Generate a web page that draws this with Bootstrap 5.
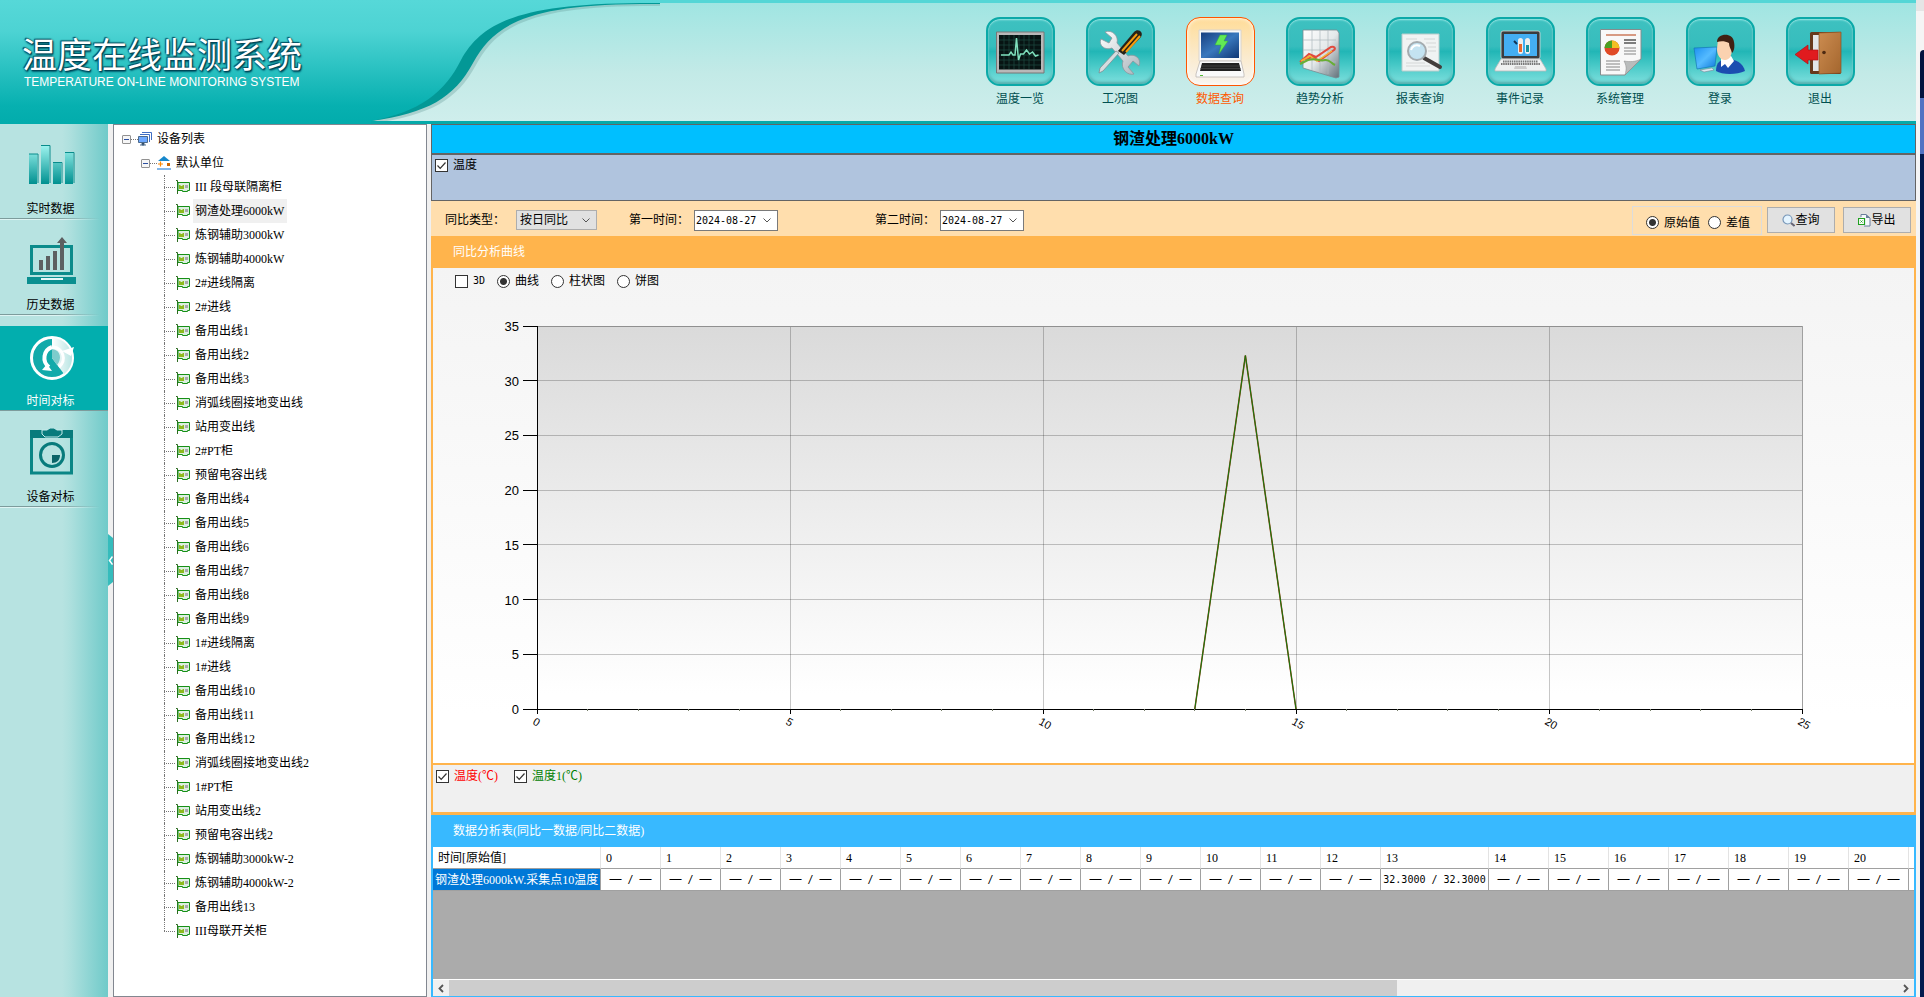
<!DOCTYPE html>
<html lang="zh-CN">
<head>
<meta charset="utf-8">
<meta name="viewport" content="width=device-width, initial-scale=1">
<title>温度在线监测系统</title>
<link href="https://cdn.jsdelivr.net/npm/bootstrap@5.3.0/dist/css/bootstrap.min.css" rel="stylesheet">
<style>
  :root { --song: "Liberation Serif", "Noto Sans CJK SC", serif; --teal: #02aeae; --amber: #ffb44c; --azure: #38b9ff; }
  body { font: 12px/18px var(--song); color: #000; background: #f0f0f0; }
  a { color: inherit; text-decoration: none; }
  .mono { font-family: "DejaVu Sans Mono", monospace; font-size: 10px; }

  /* header */
  .app-head { height: 124px; border-bottom: 3px solid #04a9a9; border-top: 3px solid #54d6d6; background: linear-gradient(#a0e5e2, #c3eae7 60%, #cfeeec); }
  .brand-zone { width: 660px; height: 124px; margin: -3px 0; }
  .brand-bg { width: 660px; height: 124px; }
  .brand-text { left: 22px; top: 35px; color: #fff; }
  .brand-title { font: 400 35px/36px "Noto Sans CJK SC", sans-serif; margin: 0; text-shadow: 0 0 2px #045, 1px 1px 1px #045, -1px -1px 1px #056, 1px 2px 2px #067; }
  .brand-sub { font: 12px/14px "Liberation Sans", Arial, sans-serif; margin: 4px 0 0 2px; white-space: nowrap; }
  .main-nav { padding: 14px 46px 0 0; color: #004f50; }
  .main-nav a { width: 100px; line-height: 16px; }
  .tile { width: 69px; height: 69px; border: 2px solid #0ba9a8; border-radius: 14px; margin-bottom: 5px;
    background: linear-gradient(#3ec1c0, #36bdbd 42%, #22b6b6 50%, #45c8c6 70%, #7fe0de); box-shadow: inset 0 1px 2px #9fe9e7, inset 0 -2px 3px #4fa9a8; }
  .tile svg { display: block; margin: -2px; width: 69px; height: 69px; }
  .current { color: #ff5a00; }
  .current .tile { border: 1px solid #ff5500; background: linear-gradient(#ffdc98, #fbeacb 55%, #f8f5f1); box-shadow: inset 0 0 4px #fff; }
  .current .tile svg { margin: -1px; }

  /* left function bar */
  .func-bar { width: 108px; background: linear-gradient(90deg, #b7e3e1 0 62px, #aee0de 70px, #6fcac9); }
  .func-bar a { height: 96px; padding: 16px 7px 0 0; background: linear-gradient(90deg, #7d9c9c 0 55px, transparent 100px) 0 94px / 100% 1px no-repeat, linear-gradient(90deg, #dff5f4 0 55px, transparent 100px) 0 95px / 100% 1px no-repeat; }
  .func-bar svg { width: 52px; height: 52px; margin-bottom: 8px; }
  .func-bar .chosen { color: #fff; background: linear-gradient(var(--teal), var(--teal)) 0 10px / 100% 84px no-repeat, linear-gradient(#7d9c9c, #7d9c9c) 0 94px / 100% 1px no-repeat; }
  .gutter { width: 5px; }
  .fold { width: 5px; height: 52px; background: #35bcbc; clip-path: polygon(0 0, 100% 4px, 100% 48px, 0 100%); margin-bottom: 411px; }
  .fold svg { width: 5px; height: 9px; display: block; }

  /* device tree */
  .tree-box { width: 314px; border: 1px solid #828790; background: #fff; padding: 2px 0 0 8px; margin-right: 4px; }
  .tree-box ul { list-style: none; margin: 0; padding: 0; }
  .node { height: 24px; line-height: 24px; white-space: nowrap; }
  .node svg { width: 14px; height: 14px; margin-right: 3px; flex: none; }
  .node span { padding: 0 3px 0 2px; }
  .toggler { width: 9px; height: 9px; border: 1px solid #919191; border-radius: 1px; background: linear-gradient(#2b4fa0, #2b4fa0) center / 5px 1px no-repeat #f6f6f6; padding: 0; }
  .stub { width: 7px; border-top: 1px dotted #777; }
  .lvl2 { padding-left: 19px; }
  .leaf { margin-left: 42px; position: relative; }
  .leaf::before { content: ""; position: absolute; left: 0; top: 0; height: 24px; border-left: 1px dotted #777; }
  .leaf:last-child::before { height: 12px; }
  .leaf .stub { width: 11px; margin-right: 1px; }
  .picked { background: #f0f0f0; }

  /* work area */
  .cap-bar { height: 30px; border: 1px solid #646464; background: #00bfff; font: bold 16px/28px var(--song); margin: 0; }
  .pick-bar { height: 47px; border: 1px solid #646464; background: #b0c4de; padding: 1px 3px; }
  input[type=checkbox], input[type=radio] { appearance: none; width: 13px; height: 13px; border: 1px solid #333; background: #fff center / 11px 11px no-repeat; margin: 0 5px 0 0; flex: none; }
  input[type=checkbox]:checked { background-image: url("data:image/svg+xml,%3Csvg xmlns='http://www.w3.org/2000/svg' viewBox='0 0 11 11'%3E%3Cpath d='M1.5 5.5l2.7 2.8L9.5 2.5' fill='none' stroke='%23333' stroke-width='1.2'/%3E%3C/svg%3E"); }
  input[type=radio] { border-radius: 50%; }
  input[type=radio]:checked { background: radial-gradient(circle, #333 0 3px, #fff 4px); }
  .query-bar { height: 35px; background: #ffdead; padding: 3px 5px 0 14px; white-space: nowrap; }
  .field { background: no-repeat right 6px center / 8px 5px url("data:image/svg+xml,%3Csvg xmlns='http://www.w3.org/2000/svg' viewBox='0 0 8 5'%3E%3Cpath d='M.5.5L4 4 7.5.5' fill='none' stroke='%23555'/%3E%3C/svg%3E"); appearance: none; border-radius: 0; color: #000; }
  .kind-label { width: 71px; }
  .day-label { width: 65px; margin-left: 32px; }
  .day-label.far { margin-left: 97px; }
  .kind { width: 81px; height: 20px; border: 1px solid #adadad; background-color: #e1e1e1; font: 12px/16px var(--song); padding: 0 3px; }
  .date { width: 84px; height: 21px; border: 1px solid #7a7a7a; background-color: #fff; padding: 0 1px; }
  .mode-box { height: 29px; width: 130px; border: 1px solid #dcdcdc; padding: 5px 0 0 13px; margin-right: 5px; }
  .push { width: 68px; height: 26px; border: 1px solid #adadad; background: #e1e1e1; font: 12px/18px var(--song); padding: 0; }
  .push svg { width: 13px; height: 13px; }
  .sec-bar { height: 32px; padding: 0 22px; color: #fff; font: 12px/32px var(--song); margin: 0; }
  .curve-card { border: solid var(--amber); border-width: 0 2px 2px; background: linear-gradient(#f4f4f4, #fff 90%); min-height: 300px; }
  .shape-row { padding: 4px 22px 0; }
  .plot-wrap { padding: 36px 112px 54px 104px; min-height: 0; }
  .plot { background: linear-gradient(#dadada, #fff 96%); }
  .plot svg { overflow: visible; position: absolute; inset: 0; width: 100%; height: 100%; font: 13px "Liberation Sans", Arial, sans-serif; }
  .plot .xlab { font-size: 11px; transform-box: fill-box; transform-origin: 0 0; transform: rotate(30deg); }
  .legend-card { height: 50px; border: solid var(--amber); border-width: 0 2px 3px; padding: 2px 3px; background: #f0f0f0; }
  .grid-card { border: solid var(--azure); border-width: 0 2px 1px; background: #ababab; }
  .grid-view { height: 132px; overflow: hidden; }
  .grid-view table { width: max-content; table-layout: fixed; border-collapse: separate; border-spacing: 0; background: #fff; }
  .grid-view th, .grid-view td { height: 22px; border-right: 1px solid #a0a0a0; border-bottom: 1px solid #a0a0a0; line-height: 18px; white-space: nowrap; width: 60px; padding: 0; text-align: center; font-weight: normal; }
  .grid-view thead th { border-right-color: #e3e3e3; text-align: left; padding-left: 5px; }
  .grid-view tr > :first-child { width: 168px; }
  .grid-view tr > :nth-child(15) { width: 108px; }
  .grid-view tbody th { background: #0078d7; color: #fff; text-align: left; padding-left: 2px; }
  .dash { font: 12px/16px "Liberation Sans", Arial, sans-serif; }
  .h-scroll { height: 17px; background: #f0f0f0; border-top: 1px solid #fff; }
  .h-scroll button { width: 16px; border: 0; padding: 0; background: none; line-height: 0; }
  .h-scroll .thumb { width: 64%; background: #cdcdcd; }
  .edge { width: 8px; background: linear-gradient(#e5e5e5 11px, #f5f5f5 0); padding: 50px 0 0 4px; }
  .edge div { border-radius: 4px 0 0 0; background: linear-gradient(#02133f 48px, #5273c3 0 104px, #031a4e 0); }
</style>
</head>
<body class="d-flex min-vh-100">

<svg width="0" height="0" class="position-absolute" aria-hidden="true">
  <defs>
    <linearGradient id="gHead" x2="0" y2="1"><stop stop-color="#56d8d8"/><stop offset=".25" stop-color="#4dd3d3"/><stop offset=".85" stop-color="#07b0b0"/><stop offset="1" stop-color="#02acac"/></linearGradient>
    <linearGradient id="gBar" x2="0" y2="1"><stop stop-color="#9ff5f0"/><stop offset="1" stop-color="#009090"/></linearGradient>
    <linearGradient id="gSilver" x2="1" y2="1"><stop stop-color="#fff"/><stop offset="1" stop-color="#a9b4bb"/></linearGradient>
    <linearGradient id="gPaper" x2="1" y2="1"><stop stop-color="#fff"/><stop offset=".5" stop-color="#e4e9ea"/><stop offset="1" stop-color="#61717a"/></linearGradient>
    <linearGradient id="gScreen" x2="1" y2="1"><stop stop-color="#184080"/><stop offset=".5" stop-color="#3978bd"/><stop offset="1" stop-color="#0f3775"/></linearGradient>
    <linearGradient id="gSky" x2="1" y2="1"><stop stop-color="#1b8ef0"/><stop offset=".5" stop-color="#55bbff"/><stop offset="1" stop-color="#0a75d8"/></linearGradient>
    <linearGradient id="gDoor" x2="1" y2="1"><stop stop-color="#cc8c50"/><stop offset="1" stop-color="#a4662e"/></linearGradient>
    <linearGradient id="gDial" x1="0" x2="1"><stop stop-color="#fff"/><stop offset="1" stop-color="#b9e5e3"/></linearGradient>
    <symbol id="card" viewBox="0 0 14 14"><path d="M0 .5h1.500V14" fill="none" stroke="#2c6b20"/><path d="M2 2.500h11.500v8h-2v1h-5v-1H2z" fill="#dcefe0" stroke="#169016"/><path d="M3 5h1.500v1h2V5H8v4H3z" fill="#8dba1e"/><path d="M9 5h3v3H9z" fill="#aaa9ad"/></symbol>
  </defs>
</svg>

<div class="d-flex flex-column flex-fill" style="min-width:0">
  <header class="app-head d-flex justify-content-between">
    <div class="brand-zone position-relative">
      <svg class="brand-bg" viewBox="0 0 660 124" aria-hidden="true">
        <path d="M371 121C428 113 454 98 473 63 494 24 528 5 640 4h20V0H0v124h371z" fill="#6b9e9c" opacity=".35" transform="translate(3 2)"/>
        <path d="M0 0h660v4h-20C528 5 494 24 473 63 454 98 428 113 371 121H0z" fill="#039896"/>
        <path d="M0 0h660v3h-20C520 4 482 22 461 60 445 92 420 112 371 121V124H0z" fill="url(#gHead)"/>
        <path d="M371 121h289v3H371z" fill="#04a9a9"/>
      </svg>
      <div class="brand-text position-absolute">
        <h1 class="brand-title text-nowrap">温度在线监测系统</h1>
        <p class="brand-sub">TEMPERATURE ON-LINE MONITORING SYSTEM</p>
      </div>
    </div>
    <nav class="main-nav d-flex text-center" aria-label="主菜单">
      <a href="#" class="d-flex flex-column align-items-center"><div class="tile"><svg viewBox="0 0 69 69"><path d="M10.500 15h47.500v41H10.500z" fill="#b8b8b8" stroke="#777"/><path d="M13 18h42v34.500H13z" fill="#071413"/><path d="M18 18v34M23 18v34M28 18v34M33 18v34M38 18v34M43 18v34M48 18v34M13 23h42M13 28h42M13 33h42M13 38h42M13 43h42M13 48h42" stroke="#1c4b43" stroke-width=".7"/><path d="M15 38h8l2-3 2 3h2l1.500-17 2 22 2-6h3l3-4 3 4 3-2 3 4 3-1" fill="none" stroke="#7fe0bd" stroke-width="1.500"/></svg></div>温度一览</a>
      <a href="#" class="d-flex flex-column align-items-center"><div class="tile"><svg viewBox="0 0 69 69"><path d="M19 15l7 6-3 5-8-4c-3 6 4 12 11 9l11 13c-3 8 5 15 11 13l-6-7 5-6 6 5c3-7-4-13-11-10L31 26c2-7-5-14-12-11z" fill="url(#gSilver)" stroke="#8b979d" stroke-width=".8"/><path d="M33 36L17 54l-4 2 1-5 16-17z" fill="#d5dcdf" stroke="#7a868b" stroke-width=".7"/><path d="M32 34L48 15c4-4 10 0 7 5L38 38z" fill="#272218"/><path d="M36 34l15-17M40 35l14-16" stroke="#f59b10" stroke-width="2"/></svg></div>工况图</a>
      <a href="#" class="current d-flex flex-column align-items-center" aria-current="page"><div class="tile"><svg viewBox="0 0 69 69"><path d="M13 13h42v31H13z" fill="#f9f9f9" stroke="#d8d4cf"/><path d="M15 15.500h38v25.500H15z" fill="url(#gScreen)"/><path d="M34 18h7l-3 6h4l-9 13 2-9h-6z" fill="#62ea55" stroke="#32ad35" stroke-width=".5"/><path d="M14 44h41l3 13v3H10v-3z" fill="#fafafa" stroke="#bcb8b4" stroke-width=".8"/><path d="M16 46h37l2 8H14z" fill="#222"/><path d="M15 49h39M14.500 51.500h40" stroke="#4a4a4a" stroke-width=".7"/><path d="M14 58.500h3" stroke="#5b3"/></svg></div>数据查询</a>
      <a href="#" class="d-flex flex-column align-items-center"><div class="tile"><svg viewBox="0 0 69 69"><path d="M17 13h34l2 3v44l-3 1-33-10z" fill="url(#gPaper)" stroke="#7a8b91" stroke-width=".8"/><path d="M17 23h33M17 33h33M17 42l33 3M26 13v40M34 13v43M42 13v44" stroke="#aeb8bc" stroke-width=".7"/><path d="M14 45l9-8 7 3 15-10c3-1 5 1 3 3L33 44l-6-4-11 3" fill="none" stroke="#e24b3e" stroke-width="2"/><path d="M15 44l9-5 7 5 15-10" fill="none" stroke="#f2b32f" stroke-width="1.500"/><path d="M14 47l8-4c10-3 10 2 17 0 4-1 6 3 10 5" fill="none" stroke="#68ae35" stroke-width="2"/></svg></div>趋势分析</a>
      <a href="#" class="d-flex flex-column align-items-center"><div class="tile"><svg viewBox="0 0 69 69"><path d="M16 17h37v37H16z" fill="#f0f3f3" stroke="#b9cccb"/><path d="M38 22h11M40 26h10M42 30h8M42 34h8M20 46h19M20 49h24M20 22h11" stroke="#d4d7d7" stroke-width="1.200"/><path d="M38 41l16 9" stroke="#443f3d" stroke-width="4" stroke-linecap="round"/><circle cx="31" cy="34" r="9" fill="#bcdff0" fill-opacity=".85" stroke="#a4abaf" stroke-width="2"/><path d="M25 33c1-4 5-6 9-4" stroke="#fff" stroke-width="2" fill="none"/></svg></div>报表查询</a>
      <a href="#" class="d-flex flex-column align-items-center"><div class="tile"><svg viewBox="0 0 69 69"><rect x="15" y="14" width="39" height="28" rx="2" fill="#3a3c3f" stroke="#dadada" stroke-width=".8"/><path d="M18 17h33v22H18z" fill="#44aef2"/><path d="M28 24l3 3" stroke="#135" stroke-width="2"/><rect x="32" y="21" width="5" height="16" rx="2.500" fill="#eee"/><rect x="39" y="21" width="5" height="16" rx="2.500" fill="#eee"/><path d="M34.500 27v8" stroke="#ea662b" stroke-width="3"/><path d="M41.500 28v7" stroke="#14919f" stroke-width="3"/><path d="M15 42h39l6 10v2H9v-2z" fill="#eff1f1" stroke="#bbb" stroke-width=".8"/><path d="M17 44.500h35M15 47h39" stroke="#777" stroke-width="2" stroke-dasharray="1.500 .7"/><path d="M29 49h11l1 3H28z" fill="#ccc"/></svg></div>事件记录</a>
      <a href="#" class="d-flex flex-column align-items-center"><div class="tile"><svg viewBox="0 0 69 69"><path d="M14.500 12.500h40.500V42L39 58H14.500z" fill="#f8f8f8" stroke="#868c8d"/><path d="M55 42L39 58c2-7 1-10-1-14 6 1 11 1 17-2z" fill="#b9bcbc" stroke="#888" stroke-width=".5"/><path d="M20 18h30" stroke="#d79a83" stroke-width="2"/><circle cx="26" cy="31" r="7.500" fill="#e04a26"/><path d="M26 31V23.500A7.500 7.500 0 0 0 18.500 31z" fill="#4aa023"/><path d="M26 31v-7.500A7.500 7.500 0 0 1 33.500 31z" fill="#f2bf25"/><path d="M38 23h12M38 26h12" stroke="#555" stroke-width="1.500"/><path d="M38 31h12M38 34h12M38 37h12M20 44h14M20 47h14M20 50h14M20 53h14" stroke="#aaa" stroke-width="1.500"/></svg></div>系统管理</a>
      <a href="#" class="d-flex flex-column align-items-center"><div class="tile"><svg viewBox="0 0 69 69"><path d="M8 31l23-1-2 19-18 3z" fill="url(#gSky)" stroke="#1479b5" stroke-width=".7"/><path d="M14 53l12-2 2 2-10 2z" fill="#d9e8f0" stroke="#778" stroke-width=".5"/><path d="M30 54c0-9 5-12 11-12 9 0 16 4 18 12-8 4-23 4-29 0z" fill="#1b4db0"/><path d="M35 41l10-2 3 5-6 7-3-4-4 3z" fill="#fff"/><path d="M32 22c8-3 14 0 14 9 0 7-2 12-7 12s-8-5-8-11z" fill="#fbd2b0"/><path d="M31 25c0-9 16-10 17 0 1 5 0 9-2 11-1-4-3-6-3-10-4-2-8-2-12-1z" fill="#402113"/></svg></div>登录</a>
      <a href="#" class="d-flex flex-column align-items-center"><div class="tile"><svg viewBox="0 0 69 69"><rect x="24" y="15" width="31" height="42" rx="1.500" fill="#67391c"/><path d="M27 18h7v36h-7z" fill="#e3e6e8"/><path d="M33 16l22-1v41l-22 1z" fill="url(#gDoor)" stroke="#8b5425" stroke-width=".7"/><circle cx="38" cy="35.500" r="1.800" fill="#4d2a12"/><path d="M9 37.500L22 28v5h10v10H22v4z" fill="#e01b1e" stroke="#b21215" stroke-width=".7"/></svg></div>退出</a>
    </nav>
  </header>

  <div class="d-flex flex-fill">
    <nav class="func-bar flex-shrink-0" aria-label="功能">
      <a href="#" class="d-flex flex-column align-items-center"><svg viewBox="0 0 52 52"><path d="M4 14h8v30H4zM16 5h8v39h-8zM28 22h8v22h-8zM40 12h8v32h-8z" fill="url(#gBar)"/><path d="M4 14h9v29M16 5.500h9V43M28 22.500h9V43M40 12.500h9V43" fill="none" stroke="#088c8c"/></svg>实时数据</a>
      <a href="#" class="d-flex flex-column align-items-center"><svg viewBox="0 0 52 52"><path d="M6.500 10.500h40v27h-40z" fill="none" stroke="#0b8b8b" stroke-width="3"/><path d="M2 41h49v7H2z" fill="#0a8f90"/><path d="M16 42h22v2H16z" fill="#e4f8f8"/><path d="M14 24h4v10h-4zM21 20h4v14h-4zM28 15h4v19h-4zM35 6h4v28h-4zM32 7l5-6 5 6z" fill="#5d5f61"/></svg>历史数据</a>
      <a href="#" class="chosen d-flex flex-column align-items-center"><svg viewBox="0 0 52 52"><circle cx="27" cy="26" r="20.500" fill="#12aaaa" stroke="#fff" stroke-width="3"/><path d="M27 6a20 20 0 0 1 12 36L27 26z" fill="url(#gDial)"/><path d="M24 35a11.500 11.500 0 0 1 3-20" fill="none" stroke="#fff" stroke-width="4"/><path d="M17 38l10 1-5-7zM37 19l12-4-3 9z" fill="#fff"/><path d="M28 15c10 1 14 13 6 20" fill="none" stroke="#fff" stroke-width="3"/><path d="M27 17c9 1 10 10 5 16l-5-7z" fill="#7ccccc"/></svg>时间对标</a>
      <a href="#" class="d-flex flex-column align-items-center"><svg viewBox="0 0 52 52"><path d="M6.500 4h40v41h-40z" fill="none" stroke="#0a8686" stroke-width="3"/><path d="M5 2h43v8H5z" fill="#087b7c"/><path d="M17 2h5l3-2h4l3 2h5v4l-4 3H20l-3-3z" fill="#087b7c" stroke="#c4eaea"/><circle cx="27" cy="27" r="11.500" fill="none" stroke="#087b7c" stroke-width="3"/><path d="M27 27h8c0 5-3 8-8 8z" fill="#0b6468"/></svg>设备对标</a>
    </nav>
    <div class="gutter flex-shrink-0 d-flex align-items-end"><button type="button" class="fold border-0 p-0" aria-label="收起"><svg viewBox="0 0 5 9"><path d="M4.500.5l-3 4 3 4" fill="none" stroke="#fff" stroke-width="1.500"/></svg></button></div>

    <aside class="tree-box flex-shrink-0">
      <ul>
        <li>
          <div class="node d-flex align-items-center"><button type="button" class="toggler" aria-label="折叠"></button><i class="stub"></i><svg viewBox="0 0 14 14"><path d="M4 .500h9.500V8M2 2.500h9.500V10" fill="none" stroke="#3f6ec4"/><path d="M.5 4.500h9v6h-9z" fill="#6ea8ff" stroke="#4b6a8c"/><path d="M4 11h2v2H4zM2 13h6" stroke="#4b6a8c"/></svg><span>设备列表</span></div>
          <div class="node lvl2 d-flex align-items-center"><button type="button" class="toggler" aria-label="折叠"></button><i class="stub"></i><svg viewBox="0 0 14 14"><path d="M1 5l6-5 6 5z" fill="#1688cc"/><path d="M1 8h5M3.500 5.500v5" stroke="#f80" stroke-width="1.200"/><path d="M10 7h3v3h-3z" fill="#c60"/><path d="M0 13h14" stroke="#0b6fd0"/></svg><span>默认单位</span></div>
          <ul id="devices"></ul>
        </li>
      </ul>
    </aside>

    <main class="d-flex flex-column flex-fill" style="min-width:0">
      <h2 class="cap-bar text-center">钢渣处理6000kW</h2>
      <div class="pick-bar"><label class="d-inline-flex align-items-center"><input type="checkbox" checked>温度</label></div>
      <form class="query-bar d-flex align-items-center">
        <label for="kind" class="kind-label">同比类型：</label>
        <select id="kind" class="field kind"><option>按日同比</option></select>
        <label for="d1" class="day-label">第一时间：</label>
        <input id="d1" class="field date mono" value="2024-08-27">
        <label for="d2" class="day-label far">第二时间：</label>
        <input id="d2" class="field date mono" value="2024-08-27">
        <div class="mode-box d-flex align-items-center ms-auto">
          <label class="d-flex align-items-center me-2"><input type="radio" name="mode" checked>原始值</label>
          <label class="d-flex align-items-center"><input type="radio" name="mode">差值</label>
        </div>
        <button type="button" class="push d-flex align-items-center justify-content-center me-2"><svg viewBox="0 0 13 13"><circle cx="5.500" cy="5.500" r="4.500" fill="#e4f4ff" stroke="#7897b8" stroke-width="1.200"/><path d="M9 9l3.500 3" stroke="#667" stroke-width="2"/></svg>查询</button>
        <button type="button" class="push d-flex align-items-center justify-content-center"><svg viewBox="0 0 13 13"><path d="M3 3V.500h5l4 3.500v8H6" fill="#f5f8fb" stroke="#6a7f9b"/><path d="M8 .500V4h4z" fill="#6a7f9b"/><path d="M.5 4.500h6v6h-6z" fill="#fff" stroke="#20a020" stroke-width="1.200"/><path d="M2.500 6.500l2 2m0-2l-2 2" stroke="#20a020"/></svg>导出</button>
      </form>

      <h3 class="sec-bar" style="background:var(--amber)">同比分析曲线</h3>
      <section class="curve-card d-flex flex-column flex-fill">
        <div class="shape-row d-flex align-items-center">
          <label class="d-flex align-items-center me-2 pe-1"><input type="checkbox"><span class="mono">3D</span></label>
          <label class="d-flex align-items-center me-2 pe-1"><input type="radio" name="shape" checked>曲线</label>
          <label class="d-flex align-items-center me-2 pe-1"><input type="radio" name="shape">柱状图</label>
          <label class="d-flex align-items-center"><input type="radio" name="shape">饼图</label>
        </div>
        <div class="plot-wrap flex-fill d-flex">
          <div class="plot position-relative flex-fill"><svg id="plot" role="img" aria-label="同比分析曲线"></svg></div>
        </div>
      </section>
      <div class="legend-card d-flex align-items-start">
        <label class="d-flex align-items-center me-3" style="color:#f00"><input type="checkbox" checked>温度(℃)</label>
        <label class="d-flex align-items-center" style="color:#008000"><input type="checkbox" checked>温度1(℃)</label>
      </div>

      <h3 class="sec-bar" style="background:var(--azure)">数据分析表(同比一数据/同比二数据)</h3>
      <section class="grid-card">
        <div class="grid-view">
          <table>
            <thead><tr id="hours"><th scope="col">时间[原始值]</th></tr></thead>
            <tbody><tr id="values"><th scope="row">钢渣处理6000kW.采集点10温度</th></tr></tbody>
          </table>
        </div>
        <div class="h-scroll d-flex">
          <button type="button" aria-label="向左"><svg width="6" height="9" viewBox="0 0 6 9"><path d="M5 1L1.500 4.500 5 8" fill="none" stroke="#555" stroke-width="1.800"/></svg></button>
          <div class="thumb"></div>
          <button type="button" class="ms-auto" aria-label="向右"><svg width="6" height="9" viewBox="0 0 6 9"><path d="M1 1l3.500 3.500L1 8" fill="none" stroke="#555" stroke-width="1.800"/></svg></button>
        </div>
      </section>
    </main>
  </div>
</div>
<div class="edge flex-shrink-0 d-flex"><div class="flex-fill"></div></div>

<script src="https://cdn.jsdelivr.net/npm/bootstrap@5.3.0/dist/js/bootstrap.bundle.min.js"></script>
<script>
  // device tree leaves
  const names = ['III 段母联隔离柜','钢渣处理6000kW','炼钢辅助3000kW','炼钢辅助4000kW','2#进线隔离','2#进线','备用出线1','备用出线2','备用出线3','消弧线圈接地变出线','站用变出线','2#PT柜','预留电容出线','备用出线4','备用出线5','备用出线6','备用出线7','备用出线8','备用出线9','1#进线隔离','1#进线','备用出线10','备用出线11','备用出线12','消弧线圈接地变出线2','1#PT柜','站用变出线2','预留电容出线2','炼钢辅助3000kW-2','炼钢辅助4000kW-2','备用出线13','III母联开关柜'];
  document.getElementById('devices').innerHTML = names.map((n, i) =>
    `<li class="node leaf d-flex align-items-center"><i class="stub"></i><svg><use href="#card"/></svg><span class="${i === 1 ? 'picked' : ''}">${n}</span></li>`).join('');

  // hourly table; the last column is a blank filler behind the scroll edge
  let heads = '', cells = '';
  for (let h = 0; h <= 20; h++) {
    heads += `<th scope="col">${h}</th>`;
    cells += h === 13 ? '<td class="mono">32.3000 / 32.3000</td>' : '<td class="mono"><span class="dash">—</span> / <span class="dash">—</span></td>';
  }
  document.getElementById('hours').insertAdjacentHTML('beforeend', heads + '<td></td>');
  document.getElementById('values').insertAdjacentHTML('beforeend', cells + '<td></td>');

  // chart: every coordinate is a share of the plot area
  const px = v => v / 25 * 100 + '%', py = v => (1 - v / 35) * 100 + '%';
  const line = (x1, y1, x2, y2, c, extra = '') => `<line x1="${x1}" y1="${y1}" x2="${x2}" y2="${y2}" stroke="${c}" ${extra}/>`;
  const crisp = 'shape-rendering="crispEdges"';
  let s = '';
  for (let v = 5; v < 25; v += 5) s += line(px(v), '0', px(v), '100%', '#00000038', crisp);
  for (let v = 5; v < 35; v += 5) s += line('0', py(v), '100%', py(v), '#00000038', crisp);
  s += line('0', '0', '100%', '0', '#909090', crisp) + line('100%', '0', '100%', '100%', '#a0a0a0', crisp);
  s += line('0', '0', '0', '100%', '#000', crisp) + line('0', '100%', '100%', '100%', '#000', crisp);
  for (let v = 0; v <= 35; v += 5)
    s += line('-14', py(v), '0', py(v), '#000', crisp) + `<text x="-18" y="${py(v)}" dy="5" text-anchor="end">${v}</text>`;
  for (let v = 0; v <= 25; v++) {
    s += `<svg y="100%" overflow="visible">${line(px(v), '0', px(v), v % 5 ? '2' : '5', v % 5 ? '#77806a' : '#000', crisp)}</svg>`;
    if (v % 5 === 0) s += `<text class="xlab" x="${px(v)}" y="100%" dx="0" dy="16">${v}</text>`;
  }
  [['#a03a10', 'stroke-width="1.500"'], ['#107a10', '']].forEach(([c, w]) => {
    s += line(px(13), py(0), px(14), py(32.3), c, w) + line(px(14), py(32.3), px(15), py(0), c, w);
  });
  document.getElementById('plot').innerHTML = s;
</script>
</body>
</html>
